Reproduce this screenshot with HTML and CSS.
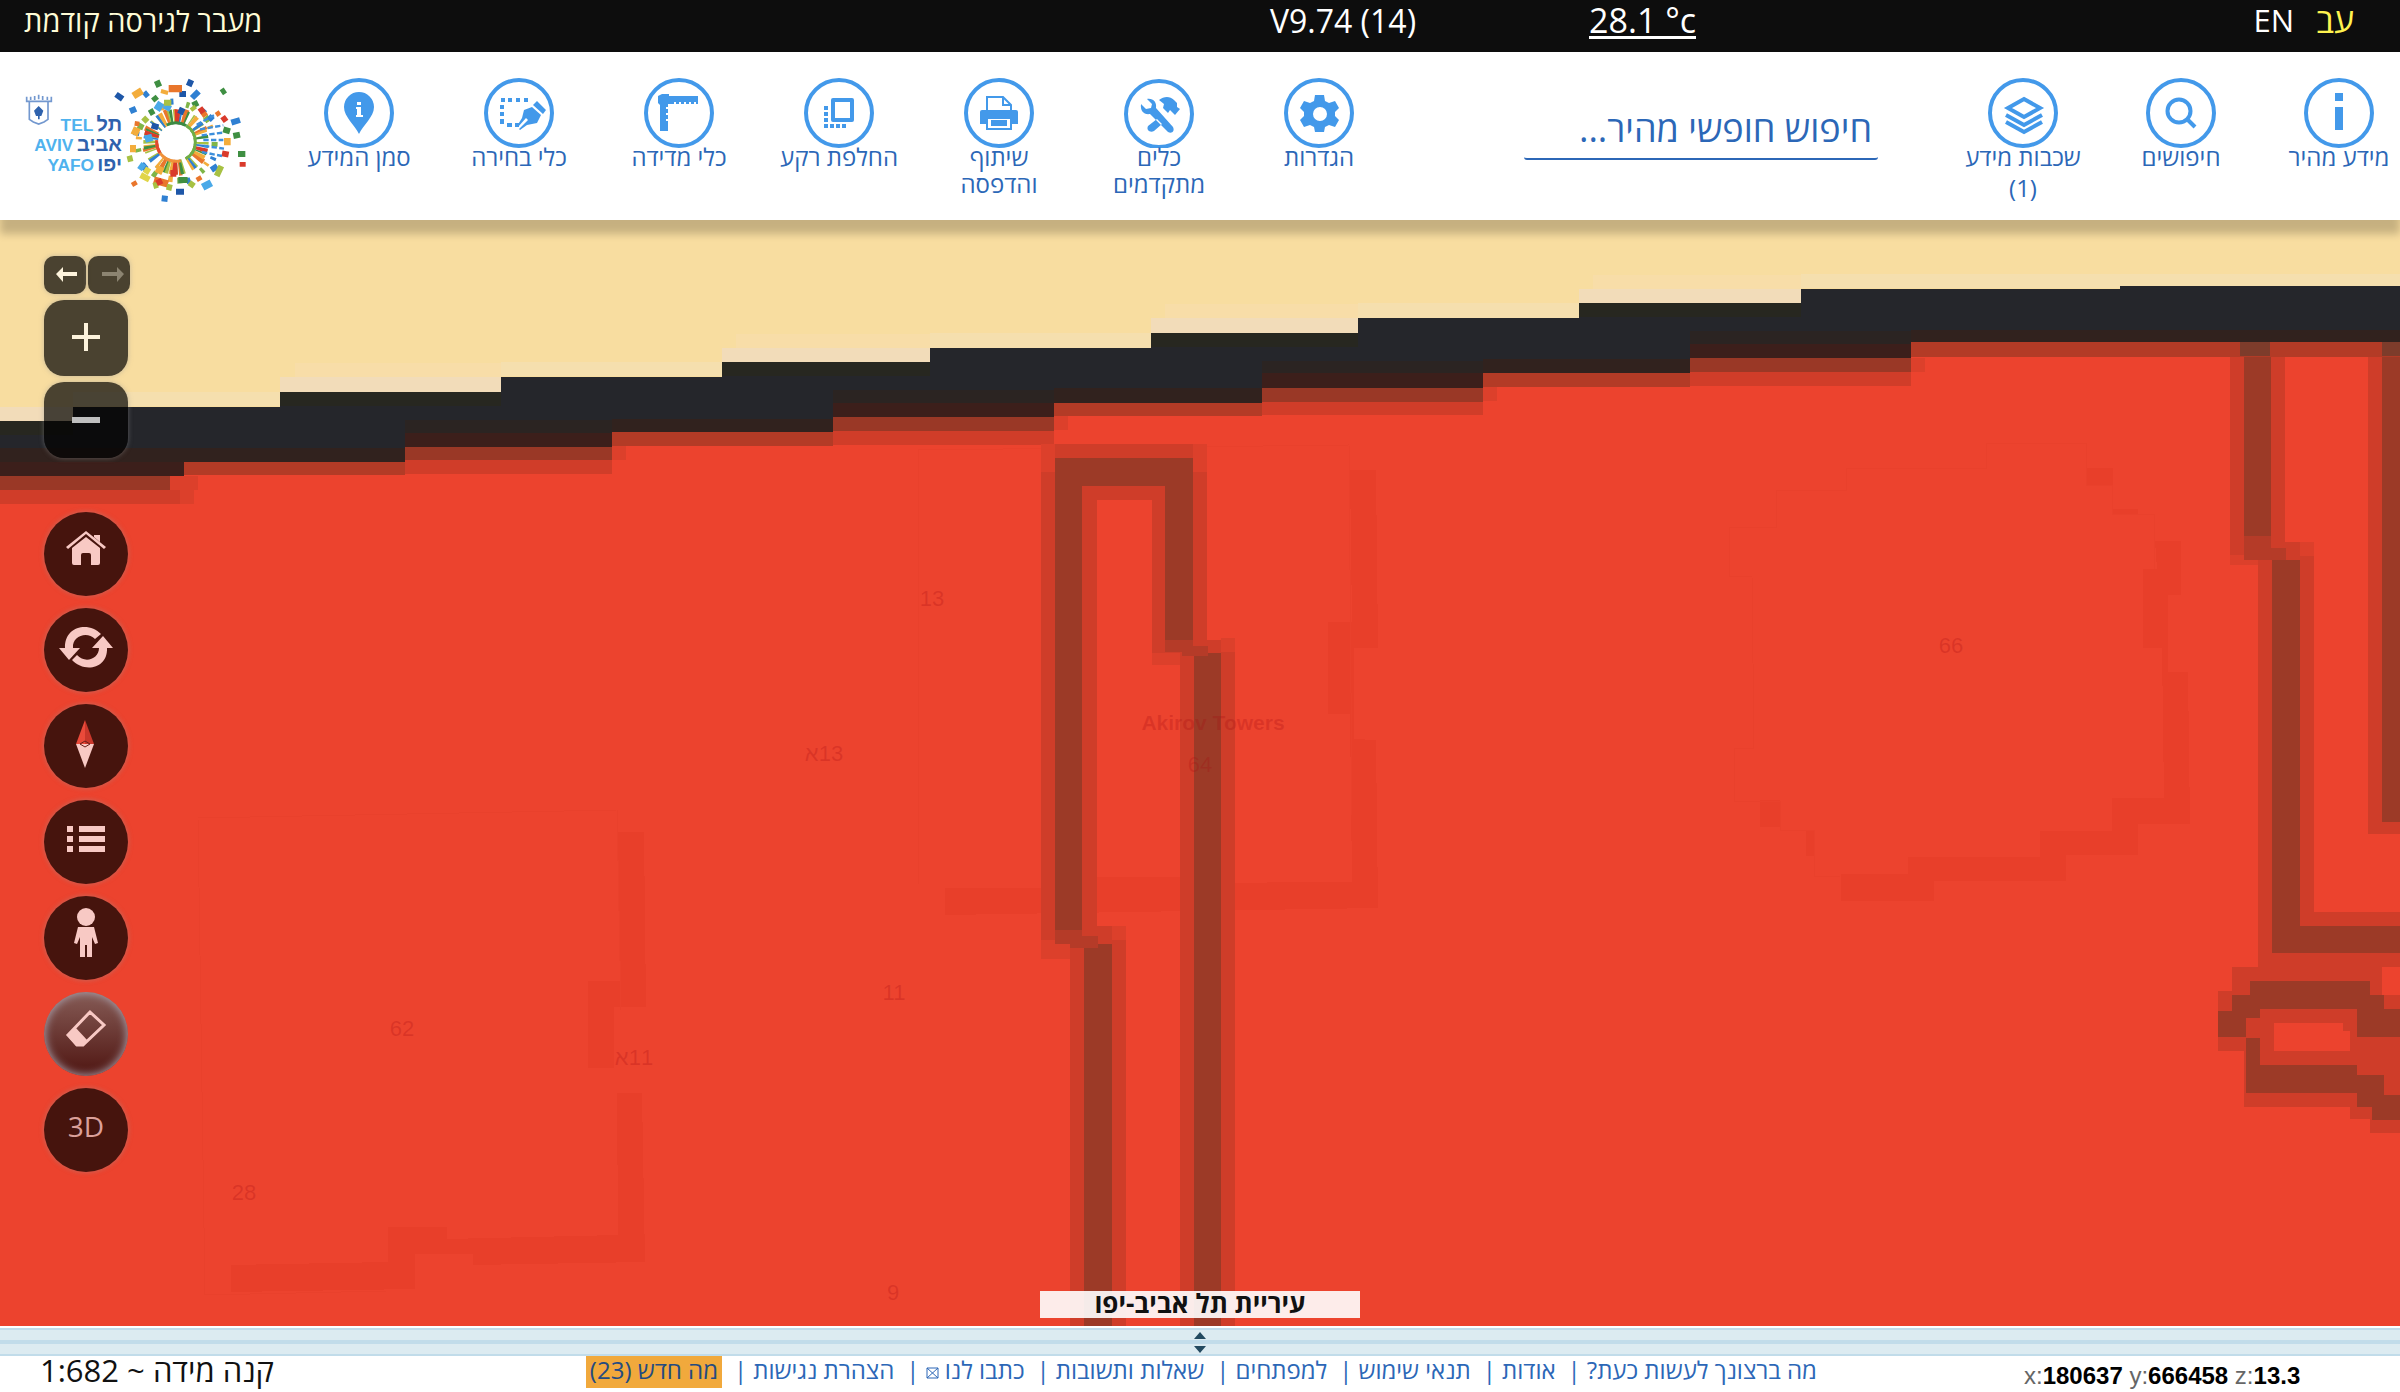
FILE: index.html
```html
<!DOCTYPE html>
<html lang="he" dir="rtl">
<head>
<meta charset="utf-8">
<title>עיריית תל אביב-יפו</title>
<link rel="stylesheet" href="styles.css">
</head>
<body>
<div class="topbar">
  <div class="langs">
    <a href="#" class="lang lang-on">עב</a>
    <a href="#" class="lang" lang="en">EN</a>
  </div>
  <a href="#" class="temp" dir="ltr">28.1 °c</a>
  <span class="version" dir="ltr">V9.74 (14)</span>
  <a href="#" class="old-version">מעבר לגירסה קודמת</a>
</div>

<header class="header">
  <nav class="main-nav">
    <button class="tool" type="button">
      <svg class="tool-icon" viewBox="0 0 70 70"><circle class="ring" cx="35" cy="35" r="33"/><path class="f" d="M31 15h8v8h-8zM31 29h8v23h-8z"/></svg>
      <span class="tool-label">מידע מהיר</span>
    </button>
    <button class="tool" type="button">
      <svg class="tool-icon" viewBox="0 0 70 70"><circle class="ring" cx="35" cy="35" r="33"/><circle class="s" cx="33" cy="33" r="11.5"/><path class="s" stroke-width="5" d="M41 41l8 8"/></svg>
      <span class="tool-label">חיפושים</span>
    </button>
    <button class="tool" type="button">
      <svg class="tool-icon" viewBox="0 0 70 70"><circle class="ring" cx="35" cy="35" r="33"/><path class="s" d="M36 21l16 9-16 9-16-9zM18 37l18 10 18-10M18 44l18 10 18-10"/></svg>
      <span class="tool-label">שכבות מידע <span class="count">(1)</span></span>
    </button>
  </nav>

  <form class="search">
    <input class="search-input" type="text" aria-label="חיפוש חופשי מהיר" placeholder="חיפוש חופשי מהיר...">
  </form>

  <nav class="tools-nav">
    <button class="tool" type="button">
      <svg class="tool-icon" viewBox="0 0 70 70"><circle class="ring" cx="35" cy="35" r="33"/><path class="f" fill-rule="evenodd" d="M31 17h9l1 6 4 2 6-2 4 7-4 4v4l4 4-4 7-6-2-4 2-1 5h-9l-1-5-4-2-6 2-4-7 4-4v-4l-4-4 4-7 6 2 4-2zM36 29a7 7 0 1 0 0 14 7 7 0 0 0 0-14z"/></svg>
      <span class="tool-label">הגדרות</span>
    </button>
    <button class="tool" type="button">
      <svg class="tool-icon" viewBox="0 0 70 70"><circle class="ring" cx="35" cy="36" r="33"/><path class="f" d="M23 21l5 5-1 4-5 1-5-5c-1 7 3 11 9 10l18 18c4 2 7-1 5-5L32 30c1-6-3-10-9-9zM35 22c5-4 11-4 15 0l3 3v4l3 2-5 6-5-5-2 3-5-5 1-4zM33 41l5 5-8 7c-4 2-8-1-6-5z"/></svg>
      <span class="tool-label">כלים<br>מתקדמים</span>
    </button>
    <button class="tool" type="button">
      <svg class="tool-icon" viewBox="0 0 70 70"><circle class="ring" cx="35" cy="35" r="33"/><path class="s thin" d="M23 32V19h16l8 8v5M39 19v8h8"/><path class="f" d="M18 32h34q2 0 2 2v12H16V34q0-2 2-2z"/><path class="w" d="M23 40h24v11H23z"/><path class="s thin" d="M23 40h24v11H23z"/><path class="f" d="M27 42h16v6H27z"/></svg>
      <span class="tool-label">שיתוף<br>והדפסה</span>
    </button>
    <button class="tool" type="button">
      <svg class="tool-icon" viewBox="0 0 70 70"><circle class="ring" cx="35" cy="35" r="33"/><path class="s" stroke-width="5" stroke-linejoin="round" d="M29 22h19v20H29z"/><path class="f" d="M20 28h4v4h-4zM20 34h4v4h-4zM20 40h4v4h-4zM20 46h4v4h-4zM26 46h4v4h-4zM32 46h4v4h-4zM38 46h4v4h-4z"/></svg>
      <span class="tool-label">החלפת רקע</span>
    </button>
    <button class="tool" type="button">
      <svg class="tool-icon" viewBox="0 0 70 70"><circle class="ring" cx="35" cy="35" r="33"/><path class="f" d="M18 16h7v2h29v8h-2v-2h-2v2h-3v-2h-2v2h-3v-2h-2v2h-3v-2h-2v2h-3v-2h-2v2h-6v3h-2v2h2v4h-2v2h2v4h-2v2h2v10h-8V27l-2-2v-7z"/></svg>
      <span class="tool-label">כלי מדידה</span>
    </button>
    <button class="tool" type="button">
      <svg class="tool-icon" viewBox="0 0 70 70"><circle class="ring" cx="35" cy="35" r="33"/><path class="f" d="M17 20h4v4h-4zM24 20h4v4h-4zM32 20h4v4h-4zM40 20h4v4h-4zM16 27h4v4h-4zM16 34h4v4h-4zM16 41h4v5h-4zM23 45h5v4h-5zM31 45h4v4h-4zM53 23l9 9-3 4-10-9zM48 29l9 8-4 8-10 2-7 5-1-1 9-9-2-2-8 9-1-1 5-8 2-8z"/></svg>
      <span class="tool-label">כלי בחירה</span>
    </button>
    <button class="tool" type="button">
      <svg class="tool-icon" viewBox="0 0 70 70"><circle class="ring" cx="35" cy="35" r="33"/><path class="f" d="M35 14a15 15 0 0 1 15 15c0 10-11 18-15 27-4-9-15-17-15-27a15 15 0 0 1 15-15z"/><path class="w" d="M33 24h4v3h-4zM32 29h5v8h2v2h-7v-2h1v-6h-1z"/></svg>
      <span class="tool-label">סמן המידע</span>
    </button>
  </nav>

  <a href="#" class="logo" aria-label="תל אביב יפו">
    <svg class="logo-svg" viewBox="0 0 750 420" direction="ltr">
      <g fill="none" stroke="#7398cf" stroke-width="5"><path d="M58 96V148l12 8 16 6 16-6 12-8V96M50 80v14h74V80M62 80v10M74 78v12M86 74v14M98 78v12M112 80v10"/></g>
      <path fill="#2f62ad" d="M86 108l14 14-6 16H78l-6-16zM84 136h5v12h-5z"/>
      <g class="logo-en"><text x="250" y="184">TEL</text><text x="190" y="243">AVIV</text><text x="252" y="302">YAFO</text></g>
      <g class="logo-he"><text x="336" y="184">תל</text><text x="336" y="243">אביב</text><text x="336" y="302">יפו</text></g>
      <g fill="none" stroke-width="44">
        <circle cx="498" cy="216" r="76" pathLength="360" stroke="#a7c143" stroke-dasharray="5 9 3 15 7 8 4 21"/>
        <circle cx="498" cy="216" r="76" pathLength="360" stroke="#2f80d2" stroke-dasharray="5 25 3 11 6 40" stroke-dashoffset="-6"/>
        <circle cx="498" cy="216" r="80" pathLength="360" stroke="#e9762c" stroke-dasharray="6 31 9 38" stroke-dashoffset="-78"/>
        <circle cx="498" cy="216" r="76" pathLength="360" stroke="#f3ad3c" stroke-dasharray="8 22 5 35" stroke-dashoffset="-95"/>
        <circle cx="498" cy="216" r="76" pathLength="360" stroke="#3f8f42" stroke-dasharray="4 51 6 29" stroke-dashoffset="-20"/>
        <circle cx="498" cy="216" r="76" pathLength="360" stroke="#d93a2b" stroke-dasharray="8 66 11 95" stroke-dashoffset="-12"/>
      </g>
      <g fill="none" stroke-width="18">
        <circle cx="498" cy="216" r="116" pathLength="360" stroke="#7fb548" stroke-dasharray="7 38 5 29 9 32"/>
        <circle cx="498" cy="216" r="122" pathLength="360" stroke="#2f80d2" stroke-dasharray="4 43 6 67" stroke-dashoffset="-22"/>
        <circle cx="498" cy="216" r="112" pathLength="360" stroke="#f3ad3c" stroke-dasharray="4 57 7 82" stroke-dashoffset="-34"/>
      </g>
      <g fill="none" stroke-width="9">
        <circle cx="498" cy="216" r="58" pathLength="360" stroke="#6fae45" stroke-dasharray="120 240" stroke-dashoffset="60"/>
        <circle cx="498" cy="216" r="58" pathLength="360" stroke="#f0913a" stroke-dasharray="100 260" stroke-dashoffset="-75"/>
        <circle cx="498" cy="216" r="58" pathLength="360" stroke="#e2482f" stroke-dasharray="40 320" stroke-dashoffset="-145"/>
        <circle cx="498" cy="216" r="58" pathLength="360" stroke="#3c8a43" stroke-dasharray="60 300" stroke-dashoffset="-240"/>
      </g>
      <g fill="none" stroke-width="18">
        <path stroke="#1e57a8" d="M318 73l20 14M536 48l8-18M498 365h24M510 132l8-18M508 72h20M425 166l20 6"/>
        <path stroke="#2f80d2" d="M360 124l18-8M546 84l20-20M664 158l26-8M455 385l18 2M395 282l14 16M604 300l18-12M402 78l12-10M596 150l12-12"/>
        <path stroke="#4aa9e8" stroke-width="22" d="M578 352l26-14M440 120l14-22M388 285l14 10M405 208l22-6M468 120l8-16"/>
        <path stroke="#f3ad3c" stroke-width="22" d="M370 78l26-16M360 236h18M372 195l10-22M462 72l3-12M642 215h20M444 310l10-20"/>
        <path stroke="#e9762c" stroke-width="22" d="M476 56h40M432 330l42 12"/>
        <path stroke="#e9762c" stroke-width="14" d="M366 345l14-8M374 160l14 2M590 128l-14 10M620 125l8 12M560 330l14-8"/>
        <path stroke="#3f8f42" d="M440 32l8 18M634 68l12-8M430 80l10 12M418 130l14-8M505 330h28M684 252h22M670 198l20-4M640 178l20 6M560 110l-8-16"/>
        <path stroke="#a7c143" d="M352 268l16-4M540 350l10-14M462 98h22M620 318l14-30M430 348l14-4M470 350l16 4M546 110l8 10M400 155l12-12"/>
        <path stroke="#e0d548" d="M392 315l26 14M406 310l10-16"/>
        <path stroke="#d93a2b" d="M698 290v-14M636 250l20 4M636 152l14-10M440 340l16-8M568 126l14-10M490 300v20"/>
        <path stroke="#3c8fdc" stroke-width="7" stroke-dasharray="16 7" d="M570 178l70-12M575 196l64-8M580 210h60M582 228l60 8M576 246l60 12M560 164l52-28"/>
      </g>
    </svg>
  </a>
</header>

<main class="map">
  <svg class="map-canvas" viewBox="0 220 2400 1106" preserveAspectRatio="xMidYMid slice" direction="ltr" shape-rendering="crispEdges">
    <path fill="#f8dda0" d="M0 220h2400v300H0z"/>
    <path fill="#ec432e" d="M0 470H184V455H612V428H1054V398H1483V368H1911V340H2400V1326H0z"/>
    <path fill="#f5dfae" d="M73 392H280v14H73zM501 362H722v14H501zM930 333h221v15H930zM1358 303h221v15h-221zM1801 274h599v14h-599z"/>
    <path fill="#f8dda8" d="M295 363H501v14H295zM736 334H930v14H736zM1165 304h193v14h-193zM1593 275h208v14h-208z"/>
    <path fill="#f2dcb9" d="M0 407H73v14H0zM280 377H501v15H280zM722 348H930v14H722zM1151 318h207v15h-207zM1579 289h222v14h-222z"/>

    <g class="shade">
      <path d="M617 832h27l2 175h-32v61h-26v-87h32zM617 1093h25l3 169-172 3v-11h-58v35l-184 3v-27l157-3v-35h59v12l171-4z"/>
      <path d="M1350 470h26l2 178h-24v91l22 1 2 168-433 7v-27h144v-11h93v6l170-1-2-168h-22v-92h24z"/>
      <path d="M2087 468h26v17h-26zM2112 509h26v6h-26zM2155 541h26v54h-13v77h20l2 152h-52v31h-72v26h-132v20h-93v-27h67v-17h132v-26h72v-33h52l-2-150h-19v-79h14zM1760 800h20v27h-20zM1806 830h8v26h-8z"/>
    </g>
    <g fill="none" class="outline">
      <path d="M198 818L617 810l4 200M198 818l7 477 182-4"/>
      <path d="M918 450l431-5 3 370M918 450v434"/>
      <path d="M1729 527h47v-37h70v-22h140v-25h100v42h26v29h42v55M1729 527v49h23l2 172h-20v53h46v29h34v46h26"/>
    </g>

    <path fill="#d03d29" d="M0 490H180v14H0zM405 460H612v14H405zM833 431h221v14H833zM1262 402h221v13h-221zM1690 372h221v14h-221z"/>
    <path fill="#dc402b" d="M170 476h28v14h-28zM180 490h14v14h-14zM612 446h14v14h-14zM1054 416h14v14h-14zM1483 387h14v14h-14zM1911 358h14v14h-14z"/>

    <g fill="#cf3d29">
      <path d="M1041 444H1207V500H1041zM1041 500h56v449h-56zM1070 926h56v400h-56zM1152 500h55v162h-55zM1180 640h55v686h-55z"/>
      <path d="M2230 342h55v213h-55zM2258 542h56v425h-56zM2258 912h142v55h-142zM2368 342h32v492h-32z"/>
      <path d="M2232 967h150v28h18v56h-50v-20h-70v20h120v56h20v26h-50v-14h-20v-12h-106v-56h-26v-60h14z"/>
    </g>
    <path fill="#ec432e" d="M2274 1023h69v28h-69zM2384 967h16v14h-16z"/>
    <g fill="#dc402b"><path d="M1041 444h14v28h-14zM1193 444h14v28h-14zM1041 940h29v19h-29zM1112 926h14v14h-14zM1152 653h28v12h-28zM1221 638h14v14h-14zM2230 555h28v10h-28zM2300 542h14v14h-14z"/></g>
    <g fill="#9c3a27">
      <path d="M1055 458H1193V486H1082V930H1055zM1084 944h28v382h-28zM1165 486h28v154h-28zM1194 653h27v673h-27z"/>
      <path d="M2244 342h27v194h-27zM2272 560h28v366h100v27h-128zM2382 342h18v480h-18z"/>
      <path d="M2250 981h120v14h14v14h16v28h-43v-28h-97v9h-14v20h14v27h97v10h27v20h16v25h-28v-13h-15v-14h-111v-56h-28v-26h14v-16h18z"/>
    </g>
    <g fill="#b53b28"><path d="M1055 930h27v14h-27zM1070 936h28v12h-28zM1165 640h28v12h-28zM1182 646h26v10h-26zM2244 536h27v24h-27zM2271 548h15v12h-15z"/></g>

    <path fill="#b33b26" d="M184 462H405v13H184zM612 432H833v14H612zM1054 402h208v14h-208zM1483 373h207v14h-207zM1911 342h489v15h-489z"/>
    <path fill="#7d3c2b" d="M2240 342h30v14h-30zM2382 342h18v14h-18z"/>
    <path fill="#9a3826" d="M0 476H170v14H0zM405 447H612v13H405zM833 417h221v14H833zM1262 388h221v14h-221zM1690 358h221v14h-221z"/>
    <path fill="#3c1f1b" d="M0 448H184v28H0zM405 433H612v14H405zM833 403h221v14H833zM1262 373h221v15h-221zM1690 344h221v14h-221z"/>
    <path fill="#25262b" d="M0 421H73V407H280V392H501V377H722V362H930V348H1151V333H1358V318H1579V303H1801V289H2120V286H2400V342H1911V344H1690V373H1483V373H1262V403H1054V403H833V432H612V433H405V462H0z"/>
    <path fill="#272720" d="M0 421H73v14H0zM280 392H501v14H280zM722 362H930v14H722zM1151 333h207v14h-207zM1579 303h222v14h-222z"/>
    <path fill="#31221e" d="M0 448H184v14H0zM184 448H405v14H184zM612 419H833v13H612zM1054 388h208v15h-208zM1483 359h207v14h-207zM1911 330h489v12h-489z"/>
    <path fill="#2b2422" d="M405 420H612v13H405zM833 390h221v13H833zM1262 361h221v12h-221zM1690 331h221v13h-221z"/>

    <g class="map-text">
      <text x="932" y="606">13</text><text x="824" y="761" direction="rtl">13א</text><text x="1951" y="653">66</text>
      <text x="402" y="1036">62</text><text x="634" y="1065" direction="rtl">11א</text><text x="894" y="1000">11</text>
      <text x="244" y="1200">28</text><text x="893" y="1300">9</text><text x="1200" y="772">64</text>
      <text x="1213" y="730" class="place">Akirov Towers</text>
    </g>
  </svg>

  <div class="controls" dir="ltr">
    <div class="history">
      <button class="step" type="button" aria-label="הקודם"><svg viewBox="0 0 42 38"><path d="M12 18l7-7v5h14v4H19v6z" fill="#fdf3dc"/></svg></button>
      <button class="step" type="button" aria-label="הבא"><svg viewBox="0 0 42 38"><path d="M36 18l-7-7v5H14v4h15v6z" fill="#8c8471"/></svg></button>
    </div>
    <button class="zoom" type="button" aria-label="הגדלה"><svg viewBox="0 0 84 76"><path d="M28 37h28M42 23v28" stroke="#fdf3dc" stroke-width="4"/></svg></button>
    <button class="zoom" type="button" aria-label="הקטנה"><svg viewBox="0 0 84 76"><path d="M28 38h28" stroke="#bfbfbf" stroke-width="6"/></svg></button>
    <div class="rounds">
      <button class="round" type="button" aria-label="בית"><svg viewBox="0 0 84 84"><path d="M42 19l20 16-2 2-18-15-18 15-2-2zM50 25v-2h6v7zM28 36l14-11 14 11v15q0 2-2 2h-7V43q0-2-2-2h-6q-2 0-2 2v10h-7q-2 0-2-2z"/></svg></button>
      <button class="round" type="button" aria-label="רענון"><svg viewBox="0 0 84 84"><path d="M21 40C20 18 45 13 57 26l-6 5c-8-8-23-3-22 9h7L25 52 15 40zM63 40c1 21-23 25-35 12l5-5c8 9 22 4 22-7h-7l11-12 10 12z"/></svg></button>
      <button class="round" type="button" aria-label="צפון"><svg viewBox="0 0 84 84"><path d="M41 16l-9 24h9z" fill="#ea4a3a"/><path d="M41 16l9 24h-9z" fill="#c9372b"/><path d="M32 40h18l-9 24z"/><path d="M36 40l5-3 5 3-5 3z" fill="none" stroke="#6a211b"/></svg></button>
      <button class="round" type="button" aria-label="מקרא"><svg viewBox="0 0 84 84"><path d="M23 26h6v6h-6zM35 26h26v6H35zM23 36h6v6h-6zM35 36h26v6H35zM23 46h6v6h-6zM35 46h26v6H35z"/></svg></button>
      <button class="round" type="button" aria-label="מבט רחוב"><svg viewBox="0 0 84 84"><circle cx="42" cy="21" r="9"/><path d="M34 31h16l4 16-3 1-3-7v20h-5V49h-2v12h-5V41l-3 7-3-1z"/></svg></button>
      <button class="round round-on" type="button" aria-label="ניקוי"><svg viewBox="0 0 84 84"><path d="M46 20L24 43l9 10h6l21-20z" fill="none" stroke="#f8c9c4" stroke-width="3"/><path d="M31 35l-8 8 9 11h7l5-5z"/></svg></button>
      <button class="round" type="button"><span class="d3">3D</span></button>
    </div>
  </div>

  <div class="owner">עיריית תל אביב-יפו</div>
</main>

<div class="splitter">
  <button class="split-half" type="button" aria-label="הצג"><svg viewBox="0 0 12 7"><path d="M6 0l6 7H0z"/></svg></button>
  <button class="split-half" type="button" aria-label="הסתר"><svg viewBox="0 0 12 7"><path d="M6 7l6-7H0z"/></svg></button>
</div>

<footer class="footer">
  <div class="coords" dir="ltr">x:<b>180637</b> y:<b>666458</b> z:<b>13.3</b></div>
  <ul class="links">
    <li><a href="#">מה ברצונך לעשות כעת?</a></li>
    <li><a href="#">אודות</a></li>
    <li><a href="#">תנאי שימוש</a></li>
    <li><a href="#">למפתחים</a></li>
    <li><a href="#">שאלות ותשובות</a></li>
    <li><a href="#">כתבו לנו <svg class="mail" viewBox="0 0 13 12"><path d="M1 1h11v10H1zM1 1l11 10M12 1L1 11"/></svg></a></li>
    <li><a href="#">הצהרת נגישות</a></li>
    <li><a href="#" class="news">מה חדש (23)</a></li>
  </ul>
  <div class="scale">קנה מידה ~ 1:682</div>
</footer>
</body>
</html>
```
FILE: styles.css
```css
* { box-sizing: border-box; }
body {
  margin: 0;
  min-height: 100vh;
  display: flex;
  flex-direction: column;
  font-family: "Open Sans", "Liberation Sans", sans-serif;
  background: #fff;
  overflow-x: hidden;
}
button { border: 0; padding: 0; background: none; font: inherit; cursor: pointer; }
a { text-decoration: none; color: inherit; }

.topbar {
  display: flex;
  align-items: flex-start;
  height: 52px;
  padding: 0 46px 0 24px;
  background: #0d0d0d;
  color: #fff;
  line-height: 42px;
}
.langs { display: flex; gap: 22px; flex: 0 0 658px; font-size: 34px; line-height: 40px; }
.langs .lang:last-child { font-size: 31px; }
.lang-on { color: #fff34f; }
.temp {
  margin-top: 4px;
  font-size: 34px;
  line-height: 32px;
  border-bottom: 3px solid #fff;
}
.version { margin-right: 173px; font-size: 32px; }
.old-version { margin-right: auto; font-size: 29px; color: #fffcd6; }

.header {
  position: relative;
  z-index: 2;
  display: flex;
  align-items: flex-start;
  min-height: 168px;
  background: #fff;
  box-shadow: 0 14px 8px rgba(0, 0, 0, .2);
}
.main-nav { display: flex; gap: 36px; }
.tool {
  display: flex;
  flex-direction: column;
  align-items: center;
  padding-top: 26px;
  color: #2c67b7;
}
.main-nav .tool { width: 122px; }
.tool-icon { width: 70px; height: 70px; }
.tool-icon .ring { fill: none; stroke: #4399ea; stroke-width: 4; }
.tool-icon .f { fill: #4399ea; }
.tool-icon .w { fill: #fff; }
.tool-icon .s { fill: none; stroke: #4399ea; stroke-width: 4; }
.tool-icon .thin { stroke-width: 2; }
.tool-label { margin-top: -5px; font-size: 24px; line-height: 27px; white-space: nowrap; }
.main-nav .tool-label { display: flex; flex-direction: column; gap: 4px; }

.search { flex: 0 1 354px; margin-right: 84px; padding-top: 49px; }
.search-input {
  width: 100%;
  height: 59px;
  padding: 0 6px 2px;
  border: 0;
  border-bottom: 2px solid #2c67b7;
  border-radius: 3px;
  background: none;
  font: inherit;
  font-size: 36px;
  color: #2c67b7;
}
.search-input::placeholder { color: #2c67b7; opacity: 1; }
.tools-nav {
  display: grid;
  grid-template-columns: repeat(7, 1fr);
  flex: 0 1 1120px;
  margin-right: auto;
}
.logo { flex: 0 0 269px; margin-left: 10px; padding-top: 18px; direction: ltr; }
.logo-svg { display: block; width: 250px; height: 140px; }
.logo-en, .logo-he { font-family: "Liberation Sans", sans-serif; font-weight: 700; font-size: 52px; text-anchor: end; }
.logo-en { fill: #4fb2ee; }
.logo-he { fill: #2f62ad; font-size: 60px; }

.map { position: relative; flex: 1 0 600px; overflow: hidden; background: #ec432e; }
.map-canvas { position: absolute; inset: 0; width: 100%; height: 100%; }
.shade { fill: #e83f2a; }
.outline { stroke: #e9412c; stroke-width: 1; }
.map-text {
  font-family: "Liberation Sans", sans-serif;
  font-size: 22px;
  fill: #a50a10;
  fill-opacity: .25;
  text-anchor: middle;
}
.place { font-weight: 700; font-size: 21px; }

.controls {
  position: absolute;
  left: 44px;
  top: 36px;
  display: flex;
  flex-direction: column;
  gap: 6px;
}
.controls button {
  display: block;
  background: rgba(0, 0, 0, .7);
  box-shadow: 0 0 5px rgba(150, 150, 150, .5);
}
.controls svg { display: block; width: 100%; height: 100%; fill: #f8c9c4; }
.history { display: flex; gap: 2px; }
.controls .step { width: 42px; height: 38px; border-radius: 10px; }
.controls .zoom { width: 84px; height: 76px; border-radius: 20px; }
.rounds { display: flex; flex-direction: column; gap: 12px; margin-top: 48px; }
.controls .round { width: 84px; height: 84px; border-radius: 50%; }
.controls .round-on {
  background: linear-gradient(rgba(100, 100, 100, .75), rgba(40, 10, 10, .8));
  box-shadow: inset 0 0 8px 1px #a9a0ac;
}
.d3 { display: block; padding-bottom: 8px; font-size: 28px; line-height: 28px; color: #dba09a; }

.owner {
  position: absolute;
  left: 0;
  right: 0;
  bottom: 8px;
  width: 320px;
  margin: 0 auto;
  padding-bottom: 3px;
  background: rgba(255, 255, 255, .9);
  color: #111;
  font-size: 26px;
  font-weight: 700;
  line-height: 24px;
  text-align: center;
}

.splitter {
  display: flex;
  flex-direction: column;
  height: 30px;
  padding-top: 2px;
}
.split-half {
  display: flex;
  justify-content: center;
  align-items: center;
  height: 14px;
  border: solid #c1dcea;
  border-width: 2px 0;
  background: #dcebf1;
}
.split-half svg { width: 12px; height: 7px; fill: #234a60; }

.footer {
  display: flex;
  align-items: flex-start;
  height: 36px;
  padding: 0 100px 0 40px;
}
.coords {
  width: 276px;
  font-family: "Liberation Sans", sans-serif;
  font-size: 24px;
  line-height: 40px;
  color: #666;
  white-space: nowrap;
}
.coords b { color: #000; }
.links {
  display: flex;
  margin: 0 207px 0 0;
  padding: 0;
  list-style: none;
  font-size: 24px;
  line-height: 28px;
  color: #2c67b7;
  white-space: nowrap;
}
.links li:not(:last-child)::after { content: "|"; margin: 0 6px 0 12px; }
.mail { width: 13px; height: 12px; fill: none; stroke: #2c67b7; }
.news { display: block; padding: 0 4px 4px; background: #f1a93c; color: #244b80; }
.scale { margin-right: auto; font-size: 31px; line-height: 29px; color: #111; }
```
